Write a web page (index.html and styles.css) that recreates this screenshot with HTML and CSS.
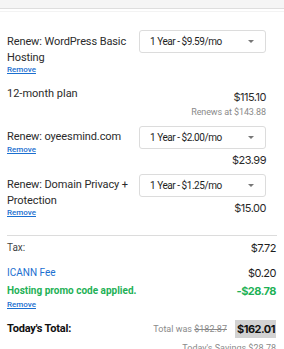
FILE: index.html
```html
<!DOCTYPE html>
<html>
<head>
<meta charset="utf-8">
<link rel="stylesheet" href="styles.css">
</head>
<body>
<div class="topbar"></div>
<div class="subline"></div>
<div class="cart">
  <div class="item item-1">
    <div class="item-left">
      <div class="name">Renew: WordPress Basic Hosting</div>
      <a class="remove" href="#">Remove</a>
    </div>
    <div class="item-right">
      <div class="select"><span>1 Year - $9.59/mo</span><span class="caret"></span></div>
    </div>
  </div>
  <div class="plan">
    <div class="plan-name">12-month plan</div>
    <div class="plan-right">
      <div class="price price-plan">$115.10</div>
      <div class="renews">Renews at $143.88</div>
    </div>
  </div>
  <div class="item item-2">
    <div class="item-left">
      <div class="name">Renew: oyeesmind.com</div>
      <a class="remove remove-tight" href="#">Remove</a>
    </div>
    <div class="item-right">
      <div class="select"><span>1 Year - $2.00/mo</span><span class="caret"></span></div>
      <div class="price">$23.99</div>
    </div>
  </div>
  <div class="item item-3">
    <div class="item-left">
      <div class="name">Renew: Domain Privacy + Protection</div>
      <a class="remove" href="#">Remove</a>
    </div>
    <div class="item-right">
      <div class="select"><span>1 Year - $1.25/mo</span><span class="caret"></span></div>
      <div class="price">$15.00</div>
    </div>
  </div>
  <div class="divider"></div>
  <div class="summary">
    <div class="srow srow-tax"><span class="label">Tax:</span><span class="amount">$7.72</span></div>
    <div class="srow srow-icann"><span class="label link">ICANN Fee</span><span class="amount">$0.20</span></div>
    <div class="srow srow-promo"><span class="label promo">Hosting promo code applied.</span><span class="amount promo">-$28.78</span></div>
    <a class="remove" href="#">Remove</a>
    <div class="srow srow-total">
      <span class="label total-label">Today's Total:</span>
      <span class="total-right"><span class="was">Total was <s>$182.87</s></span><span class="total">$162.01</span></span>
    </div>
    <div class="savings">Today's Savings $28.78</div>
  </div>
</div>
</body>
</html>
```
FILE: styles.css
```css
html, body {
  margin: 0;
  padding: 0;
  background: #fff;
}
body {
  font-family: Roboto, "Liberation Sans", Arial, sans-serif;
  color: #2b2b2b;
  width: 284px;
  overflow: hidden;
}
.topbar {
  height: 8px;
  background: #f5f5f5;
  border-bottom: 1px solid #dedede;
}
.subline {
  margin-top: 2px;
  height: 1px;
  background: #f3f3f3;
}
.cart {
  padding: 0 7px 0 7px;
  width: 270px;
}
.item {
  display: flex;
  justify-content: space-between;
  padding-right: 11px;
}
.item-1 { margin-top: 18px; }
.item-2 { margin-top: 7px; }
.item-3 { margin-top: 6px; }
.item-left {
  width: 130px;
  padding-top: 3px;
}
.item-1 .item-left { padding-top: 4px; }
.name {
  font-size: 11px;
  line-height: 16px;
  color: #2b2b2b;
  letter-spacing: -0.1px;
}
.remove {
  display: block;
  font-size: 8px;
  line-height: 8px;
  font-weight: 500;
  color: #1b6fd0;
  text-decoration: underline;
  width: fit-content;
}
.remove-tight { margin-top: 1px; }
.item-right {
  display: flex;
  flex-direction: column;
  align-items: flex-end;
}
.select {
  box-sizing: border-box;
  width: 127px;
  height: 23px;
  border: 1px solid #dcdcdc;
  border-radius: 3px;
  display: flex;
  align-items: center;
  justify-content: space-between;
  padding: 0 11px 0 10px;
  font-size: 10px;
  letter-spacing: -0.45px;
  color: #1e1e1e;
}
.caret {
  width: 0;
  height: 0;
  border-left: 3px solid transparent;
  border-right: 3px solid transparent;
  border-top: 3px solid #777;
}
.price,
.amount,
.total {
  font-family: Inter, Roboto, sans-serif;
  font-variant-numeric: proportional-nums;
}
.price {
  margin-top: 3px;
  font-size: 11px;
  line-height: 16px;
  letter-spacing: -0.5px;
  color: #2b2b2b;
}
.plan {
  display: flex;
  justify-content: space-between;
  padding-right: 11px;
  margin-top: 12px;
}
.plan-name {
  font-size: 11px;
  line-height: 16px;
}
.plan-right {
  display: flex;
  flex-direction: column;
  align-items: flex-end;
}
.price-plan { margin-top: 3px; }
.renews {
  font-size: 9px;
  line-height: 14px;
  color: #8a8a8a;
  letter-spacing: -0.1px;
}
.divider {
  margin-top: 18px;
  height: 1px;
  background: #dcdcdc;
}
.summary {
  padding-right: 1px;
}
.srow {
  display: flex;
  justify-content: space-between;
  align-items: center;
  line-height: 16px;
}
.srow-tax { margin-top: 4px; }
.srow-icann { margin-top: 9px; }
.srow-promo { margin-top: 2px; }
.label {
  font-size: 10px;
  color: #444;
}
.amount {
  font-size: 11px;
  letter-spacing: -0.5px;
  color: #1e1e1e;
}
.link { color: #1b6fd0; }
.promo {
  color: #1eb156;
  font-weight: 700;
}
.label.promo { font-size: 10px; }
.summary .remove { margin-top: 2px; }
.srow-total {
  margin-top: 11px;
  line-height: 18px;
}
.total-label {
  font-size: 11px;
  font-weight: 700;
  color: #111;
  letter-spacing: -0.2px;
}
.total-right {
  display: flex;
  align-items: center;
  gap: 8px;
}
.was {
  font-size: 9px;
  color: #8a8a8a;
}
.total {
  background: #d2d2d2;
  font-size: 11px;
  font-weight: 700;
  letter-spacing: -0.5px;
  color: #111;
  padding: 0 1px 0 2px;
}
.savings {
  text-align: right;
  font-size: 9px;
  line-height: 14px;
  margin-top: 3px;
  color: #8a8a8a;
}
```
